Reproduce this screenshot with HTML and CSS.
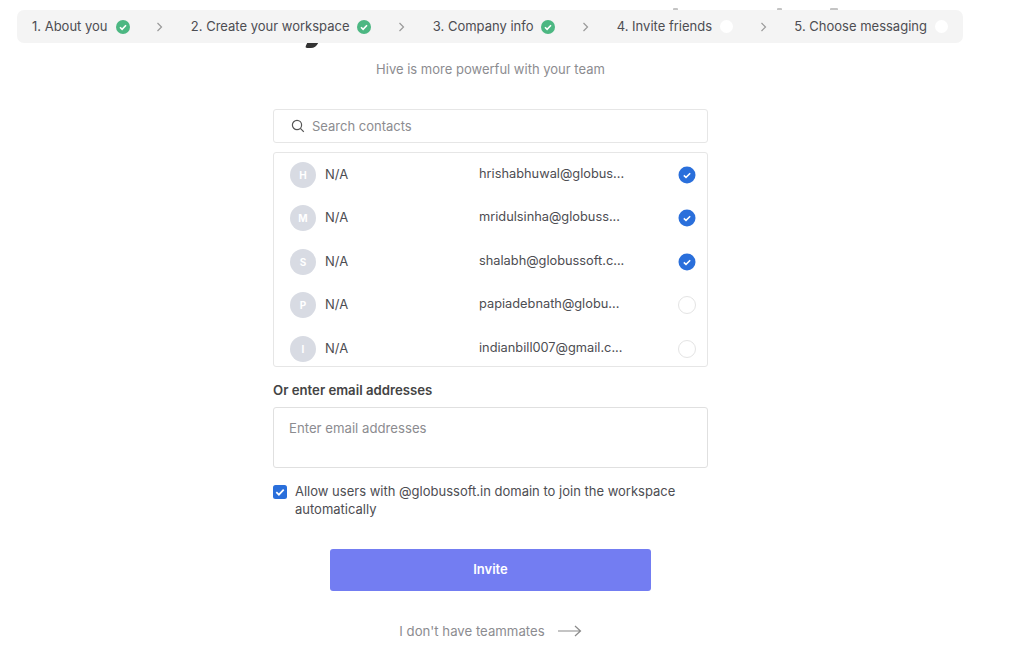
FILE: index.html
```html
<!DOCTYPE html>
<html lang="en">
<head>
<meta charset="utf-8">
<title>Invite friends</title>
<link rel="stylesheet" href="styles.css">
</head>
<body>
<i class="frag frag-a"></i><i class="frag frag-b"></i><i class="frag frag-c"></i><i class="frag frag-y"></i>
<nav class="stepper">
  <div class="step"><span>1. About you</span><svg class="dot" viewBox="0 0 14 14"><circle cx="7" cy="7" r="7" fill="#4cb782"/><path d="M4 7.200l2.100 2.100L10 5.200" fill="none" stroke="#fff" stroke-width="1.600"/></svg></div>
  <svg class="chev" viewBox="0 0 8 10"><path d="M1.500 1l4 4-4 4" fill="none" stroke="#999" stroke-width="1.200"/></svg>
  <div class="step"><span>2. Create your workspace</span><svg class="dot" viewBox="0 0 14 14"><circle cx="7" cy="7" r="7" fill="#4cb782"/><path d="M4 7.200l2.100 2.100L10 5.200" fill="none" stroke="#fff" stroke-width="1.600"/></svg></div>
  <svg class="chev" viewBox="0 0 8 10"><path d="M1.500 1l4 4-4 4" fill="none" stroke="#999" stroke-width="1.200"/></svg>
  <div class="step"><span>3. Company info</span><svg class="dot" viewBox="0 0 14 14"><circle cx="7" cy="7" r="7" fill="#4cb782"/><path d="M4 7.200l2.100 2.100L10 5.200" fill="none" stroke="#fff" stroke-width="1.600"/></svg></div>
  <svg class="chev" viewBox="0 0 8 10"><path d="M1.500 1l4 4-4 4" fill="none" stroke="#999" stroke-width="1.200"/></svg>
  <div class="step"><span>4. Invite friends</span><i class="open-dot"></i></div>
  <svg class="chev" viewBox="0 0 8 10"><path d="M1.500 1l4 4-4 4" fill="none" stroke="#999" stroke-width="1.200"/></svg>
  <div class="step"><span>5. Choose messaging</span><i class="open-dot"></i></div>
</nav>
<main class="page">
  <p class="sub">Hive is more powerful with your team</p>
  <div class="search">
    <svg class="search-ic" viewBox="0 0 14 14"><circle cx="6" cy="6" r="4.600" fill="none" stroke="#555" stroke-width="1.200"/><path d="M9.400 9.400l3.400 3.400" stroke="#555" stroke-width="1.200"/></svg>
    <span>Search contacts</span>
  </div>
  <div class="list">
    <div class="row"><span class="avatar">H</span><span class="name">N/A</span><span class="email">hrishabhuwal@globus...</span><svg class="tick" viewBox="0 0 18 18"><circle cx="9" cy="9" r="8.500" fill="#2a6fdb"/><path d="M5.800 9.400l2.200 2 4.200-4.200" fill="none" stroke="#fff" stroke-width="1.500"/></svg></div>
    <div class="row"><span class="avatar">M</span><span class="name">N/A</span><span class="email">mridulsinha@globuss...</span><svg class="tick" viewBox="0 0 18 18"><circle cx="9" cy="9" r="8.500" fill="#2a6fdb"/><path d="M5.800 9.400l2.200 2 4.200-4.200" fill="none" stroke="#fff" stroke-width="1.500"/></svg></div>
    <div class="row"><span class="avatar">S</span><span class="name">N/A</span><span class="email">shalabh@globussoft.c...</span><svg class="tick" viewBox="0 0 18 18"><circle cx="9" cy="9" r="8.500" fill="#2a6fdb"/><path d="M5.800 9.400l2.200 2 4.200-4.200" fill="none" stroke="#fff" stroke-width="1.500"/></svg></div>
    <div class="row"><span class="avatar">P</span><span class="name">N/A</span><span class="email">papiadebnath@globu...</span><i class="untick"></i></div>
    <div class="row"><span class="avatar">I</span><span class="name">N/A</span><span class="email">indianbill007@gmail.c...</span><i class="untick"></i></div>
  </div>
  <h2 class="label">Or enter email addresses</h2>
  <div class="area">Enter email addresses</div>
  <div class="allow">
    <svg class="box" viewBox="0 0 14 14"><rect width="14" height="14" rx="2.500" fill="#2a6fdb"/><path d="M3.300 7.200l2.600 2.500 4.800-5" fill="none" stroke="#fff" stroke-width="1.700"/></svg>
    <span>Allow users with @globussoft.in domain to join the workspace automatically</span>
  </div>
  <button class="invite">Invite</button>
  <div class="skip"><span>I don't have teammates</span><svg class="arrow" viewBox="0 0 24 12"><path d="M0 6h22M17 1l5.500 5-5.500 5" fill="none" stroke="#8a8a8a" stroke-width="1.200"/></svg></div>
</main>
</body>
</html>
```
FILE: styles.css
```css
* { box-sizing: border-box; }
html, body { margin: 0; height: 654px; overflow: hidden; background: #fff; }
body { font-family: "Inter", "Liberation Sans", sans-serif; font-size: 13px; color: #4d4d52; position: relative; }
.frag { position: absolute; display: block; background: #c4c4c4; top: 8px; height: 2px; border-radius: 1px 1px 0 0; }
.frag-a { left: 673px; width: 5px; }
.frag-b { left: 777px; width: 5px; }
.frag-c { left: 830px; width: 8px; }
.frag-y { left: 306px; top: 43px; width: 11px; height: 5px; background: #333; border-radius: 0 0 6px 3px; transform: skewX(-25deg); }
.stepper { position: absolute; left: 17px; top: 10px; width: 946px; height: 33px; background: #f4f4f4; border-radius: 7px; display: flex; align-items: center; justify-content: space-between; padding: 0 15px; }
.step { display: flex; align-items: center; gap: 8px; line-height: 31px; }
.dot { width: 14px; height: 14px; flex: none; }
.open-dot { width: 13px; height: 13px; flex: none; border-radius: 50%; background: #fff; }
.chev { width: 8px; height: 10px; }
.page { width: 435px; margin-left: 273px; display: flex; flex-direction: column; padding-top: 60px; }
.sub { margin: 0; text-align: center; color: #8c8c90; height: 18px; line-height: 18px; }
.search { margin-top: 31px; height: 34px; border: 1px solid #e6e6e6; border-radius: 3px; display: flex; align-items: center; gap: 7px; padding-left: 17px; color: #8c8c90; line-height: 30px; }
.search-ic { width: 14px; height: 14px; }
.list { margin-top: 9px; height: 215px; border: 1px solid #e6e6e6; border-radius: 3px; overflow: hidden; padding: 8.7px 11px 0 16px; display: flex; flex-direction: column; gap: 17px; }
.row { display: flex; align-items: flex-start; height: 26.5px; flex: none; }
.avatar { width: 26px; height: 26px; border-radius: 50%; background: #d8dbe3; color: #fff; font-size: 10px; font-weight: 700; display: flex; align-items: center; justify-content: center; flex: none; }
.name { width: 154px; margin-left: 9px; line-height: 24px; }
.email { width: 199px; font-size: 12.8px; line-height: 24px; white-space: nowrap; }
.tick, .untick { width: 18px; height: 18px; margin-top: 4px; flex: none; }
.untick { border: 1px solid #e4e4e4; border-radius: 50%; }
.label { margin: 14px 0 0; font-size: 13.2px; font-weight: 600; line-height: 18px; color: #444; }
.area { margin-top: 8px; height: 61px; border: 1px solid #e0e0e0; border-radius: 3px; padding: 12px 15px; color: #8c8c90; font-size: 13.2px; }
.allow { margin-top: 14px; display: flex; gap: 8px; line-height: 18px; }
.box { width: 14px; height: 14px; flex: none; margin-top: 3px; }
.invite { margin: 31px auto 0; display: block; width: 321px; height: 42px; border: 0; border-radius: 3px; background: #737df2; color: #fff; font: 600 13px "Inter", sans-serif; padding-bottom: 3px; }
.skip { margin-top: 32px; display: flex; justify-content: center; align-items: center; gap: 13px; color: #8c8c90; font-size: 13.2px; }
.arrow { width: 24px; height: 12px; }
```
